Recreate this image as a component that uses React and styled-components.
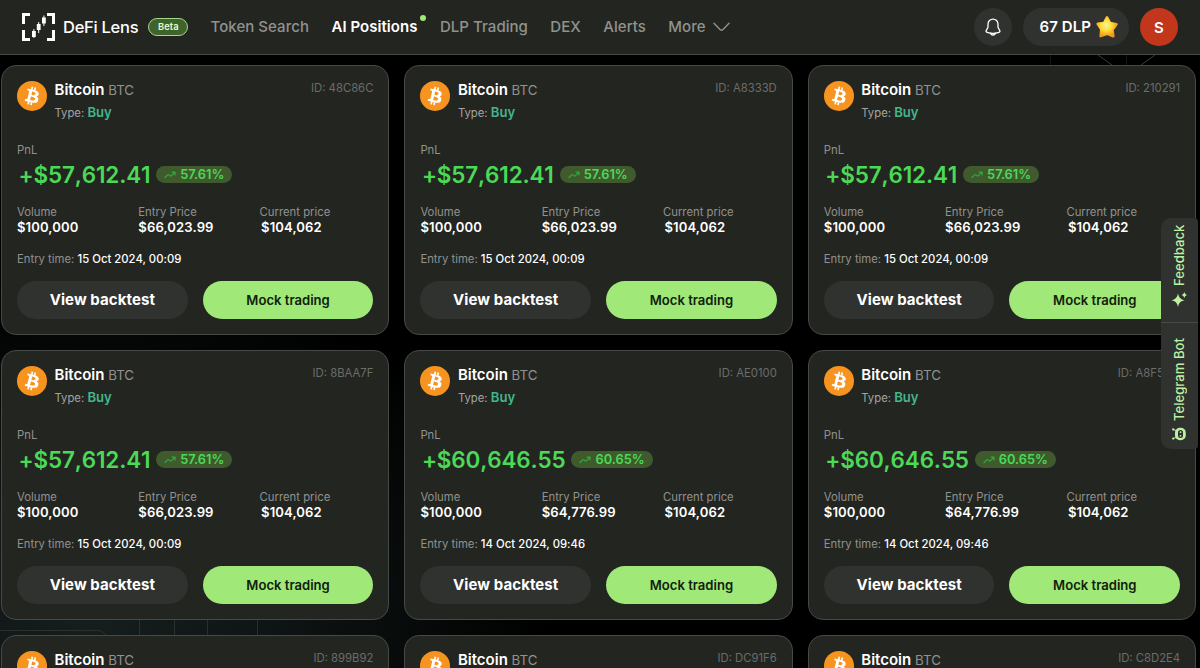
import React from "react";
import styled, { createGlobalStyle } from "styled-components";

const GlobalStyle = createGlobalStyle`
  * { box-sizing: border-box; }
  html, body { margin: 0; height: 668px; overflow: hidden; background: #000; }
  body { font-family: Inter, "Liberation Sans", sans-serif; color: #fff; }
`;

const Page = styled.div`
  position: relative;
  width: 1200px;
  height: 668px;
  overflow: hidden;
  background:
    radial-gradient(ellipse 460px 330px at 90px 610px, #161f1e 0%, #0d1312 45%, rgba(0, 0, 0, 0) 100%),
    #000;
`;

const Backdrop = styled.svg`
  position: absolute;
  inset: 0;
`;

const Header = styled.header`
  position: relative;
  display: flex;
  align-items: center;
  height: 55px;
  padding: 0 22px;
  background: #232521;
  border-bottom: 1px solid #474946;
`;

const Brand = styled.div`
  display: flex;
  align-items: center;
  width: 188.5px;
`;

const BrandName = styled.span`
  margin-left: 8px;
  font-size: 16.5px;
  font-weight: 500;
  letter-spacing: -0.27px;
  white-space: nowrap;
`;

const BetaTag = styled.span`
  margin-left: 10px;
  width: 40px;
  height: 18px;
  border: 1px solid #a5d78a;
  border-radius: 9px;
  background: #3f632c;
  color: #e2fbd3;
  font-size: 9.4px;
  font-weight: 600;
  line-height: 16px;
  text-align: center;
`;

const Nav = styled.nav`
  display: flex;
  align-items: center;
  gap: 22.4px;
  flex: 1;
  padding-bottom: 1px;
`;

const NavItem = styled.a`
  position: relative;
  display: flex;
  align-items: center;
  gap: 7px;
  font-size: 15px;
  font-weight: ${(p) => (p.$active ? 600 : 500)};
  letter-spacing: 0.05px;
  color: ${(p) => (p.$active ? "#fff" : "#91928f")};
  white-space: nowrap;
`;

const NavDot = styled.i`
  position: absolute;
  top: -2px;
  right: -8px;
  width: 6px;
  height: 6px;
  border-radius: 50%;
  background: #a0e878;
`;

const Actions = styled.div`
  display: flex;
  align-items: center;
  gap: 11px;
`;

const RoundButton = styled.button`
  display: flex;
  align-items: center;
  justify-content: center;
  width: 38px;
  height: 38px;
  padding: 0;
  border: 0;
  border-radius: 50%;
  background: ${(p) => p.$color || "#30322f"};
  color: #fff;
  font: 600 15px Inter, sans-serif;
`;

const Balance = styled.div`
  display: flex;
  align-items: center;
  gap: 5px;
  width: 106px;
  height: 38px;
  padding: 0 0 1px 16.5px;
  border-radius: 19px;
  background: #30322f;
  font-size: 15px;
  font-weight: 600;
  letter-spacing: 0.08px;
  white-space: nowrap;
`;

const Grid = styled.main`
  position: relative;
  display: grid;
  grid-template-columns: repeat(3, 388.4px);
  grid-auto-rows: 269.5px;
  gap: 15.5px 15px;
  padding: 10px 0 0 1px;
`;

const Card = styled.article`
  display: flex;
  flex-direction: column;
  padding: 14px 15px;
  border: 1px solid #474946;
  border-radius: 15px;
  background: #232521;
`;

const CardHead = styled.div`
  display: flex;
  height: 62px;
`;

const Identity = styled.div`
  flex: 1;
  padding-left: 7.5px;
`;

const AssetName = styled.div`
  height: 20px;
  line-height: 20px;
  font-size: 15px;
  font-weight: 600;
`;

const Ticker = styled.span`
  font-size: 13.3px;
  font-weight: 400;
  color: #91928f;
`;

const TradeType = styled.div`
  margin-top: 2px;
  line-height: 20px;
  font-size: 11.3px;
  color: #a3a4a2;
`;

const Side = styled.span`
  font-size: 13.1px;
  font-weight: 600;
  color: #43b58c;
`;

const PositionId = styled.div`
  padding-top: 1px;
  line-height: 15px;
  font-size: 11.3px;
  color: #6b6d6a;
`;

const Caption = styled.div`
  height: 16px;
  line-height: 16px;
  font-size: 11.3px;
  color: #91928f;
  white-space: nowrap;
`;

const Profit = styled.div`
  display: flex;
  align-items: center;
  gap: 6px;
  height: 29px;
  margin: 2px 0 15px;
  padding-left: 1.5px;
  font-size: 22.5px;
  font-weight: 600;
  font-kerning: none;
  letter-spacing: -0.17px;
  color: #4bd956;
`;

const GainTag = styled.span`
  display: flex;
  align-items: center;
  gap: 4px;
  height: 17px;
  padding: 0 8px;
  border-radius: 9px;
  background: #3f5b2e;
  font-size: 12.8px;
  font-weight: 600;
  font-kerning: normal;
  letter-spacing: 0;
`;

const Stats = styled.div`
  display: grid;
  grid-template-columns: repeat(3, 1fr);
  column-gap: 7.5px;
  height: 47px;
`;

const StatValue = styled.div`
  height: 16px;
  padding-left: ${(p) => (p.$inset ? "1.5px" : "0")};
  line-height: 15px;
  font-size: 13.1px;
  font-weight: 600;
  letter-spacing: 0.1px;
`;

const EntryTime = styled.span`
  font-weight: 500;
  letter-spacing: 0.02px;
  color: #fff;
`;

const Buttons = styled.div`
  display: flex;
  gap: 15px;
  margin-top: 14px;
`;

const Button = styled.button`
  flex: 1;
  height: 37.5px;
  padding: 0;
  border: 0;
  border-radius: 19px;
  background: ${(p) => (p.$primary ? "#a0e878" : "#30322f")};
  color: ${(p) => (p.$primary ? "#10200c" : "#fff")};
  font-family: Inter, sans-serif;
  font-size: ${(p) => (p.$primary ? "13.1px" : "15px")};
  font-weight: ${(p) => (p.$primary ? 600 : 700)};
  letter-spacing: ${(p) => (p.$primary ? "0" : "0.08px")};
`;

const SideTabs = styled.aside`
  position: absolute;
  top: 218px;
  left: 1161px;
  width: 37px;
  height: 231px;
  border-radius: 10px 4px 4px 10px;
  background: #30322f;
`;

const SideTab = styled.div`
  display: flex;
  align-items: center;
  gap: 6px;
  width: 37px;
  height: ${(p) => p.$height}px;
  padding-top: ${(p) => p.$pad}px;
  writing-mode: vertical-rl;
  transform: rotate(180deg);
  line-height: 37px;
  font-size: 13.1px;
  font-weight: 500;
  color: #bdf0a0;
  border-top: ${(p) => (p.$divided ? "1px solid #474946" : "0")};
  white-space: nowrap;
`;

const Logo = () => (
  <svg width="33" height="28" viewBox="0 0 33 28" fill="#fff">
    <path d="M0 0h8v3H3v8H0zM25 0h8v11h-3V3h-5zM0 17h3v8h5v3H0zM30 17h3v11h-8v-3h5z" />
    <path d="M10 18h3.8v6H10zM14.8 11h3.8v6h-3.8zM20 4.5h3.8v6H20z" />
    <path d="M11.4 16h1v9h-1zM16.2 9h1v11h-1zM21.4 2.5h1v10.5h-1z" />
  </svg>
);

const Chevron = () => (
  <svg width="17" height="10" viewBox="0 0 17 10" fill="none" stroke="#91928f" strokeWidth="1.4" strokeLinecap="round">
    <path d="M1 1.2 7 7.4Q8.5 8.8 10 7.4L16 1.2" />
  </svg>
);

const Bell = () => (
  <svg width="16" height="18" viewBox="0 0 16 18" fill="none" stroke="#fff" strokeWidth="1.3" strokeLinecap="round" strokeLinejoin="round">
    <path d="M8 1.1a5 5 0 0 0-5 5v2.6c0 .7-.3 1.4-.7 2l-1 1.6c-.6 1-.2 1.8.8 2.1 3.8 1.2 8 1.2 11.8 0 1-.3 1.4-1.2.8-2.1l-1-1.6c-.4-.6-.7-1.3-.7-2V6.1a5 5 0 0 0-5-5z" />
    <path d="M5.6 15.2a2.5 2.5 0 0 0 4.8 0" />
  </svg>
);

const Star = () => (
  <svg width="23" height="24" viewBox="0 0 23 24">
    <defs>
      <radialGradient id="star" cx="45%" cy="42%" r="58%">
        <stop offset="0" stopColor="#fff6a0" />
        <stop offset=".5" stopColor="#ffdc36" />
        <stop offset="1" stopColor="#f59a1c" />
      </radialGradient>
    </defs>
    <path
      d="M11 2.3 14.1 8 20.5 9.2 16.4 14.6 17.3 21.2 11.2 18.7 4.7 21 5.3 14.2 1.7 8.8 8 8z"
      fill="url(#star)"
      stroke="url(#star)"
      strokeWidth="2.6"
      strokeLinejoin="round"
    />
  </svg>
);

const BitcoinIcon = () => (
  <svg width="30" height="31" viewBox="0 -.5 32 32">
    <circle cx="16" cy="16" r="16" fill="#f7931f" />
    <path
      fill="#fff"
      fillRule="evenodd"
      d="M23.189 14.02c.314-2.096-1.283-3.223-3.465-3.975l.708-2.84-1.728-.43-.69 2.765c-.454-.114-.92-.22-1.385-.326l.695-2.783L15.596 6l-.708 2.839c-.376-.086-.746-.17-1.104-.26l.002-.009-2.384-.595-.46 1.846s1.283.294 1.256.312c.7.175.826.638.805 1.006l-.806 3.235c.048.012.11.03.18.057l-.183-.045-1.13 4.532c-.086.212-.303.531-.793.41.018.025-1.256-.313-1.256-.313l-.858 1.978 2.25.561c.418.105.828.215 1.231.318l-.715 2.872 1.727.43.708-2.84c.472.127.93.245 1.378.357l-.706 2.828 1.728.43.715-2.866c2.948.558 5.164.333 6.097-2.333.752-2.146-.037-3.385-1.588-4.192 1.13-.26 1.98-1.003 2.207-2.538zm-3.95 5.538c-.533 2.147-4.148.986-5.32.695l.95-3.805c1.172.293 4.929.872 4.37 3.11zm.535-5.569c-.487 1.953-3.495.96-4.47.717l.86-3.45c.975.243 4.118.696 3.61 2.733z"
    />
  </svg>
);

const TrendIcon = () => (
  <svg width="12" height="8" viewBox="0 0 12 8" fill="none" stroke="#35a83c" strokeWidth="1.2" strokeLinecap="round" strokeLinejoin="round">
    <path d="M1 6.5 3.6 3.9Q4.3 3.3 5 3.9L6.2 4.8Q6.9 5.3 7.5 4.7L10.8 1.4M8.2 1.2H11V3.9" />
  </svg>
);

const Sparkle = () => (
  <svg width="15" height="15" viewBox="0 0 15 15" fill="#bdf0a0" transform="rotate(180)" overflow="visible">
    <path d="M6 1.5Q7 7.500 12.500 8.300 7 9.100 6 15 5 9.100-.5 8.300 5 7.500 6 1.500z" />
    <path d="M12.300 0Q12.800 2.400 15 3 12.800 3.600 12.300 6 11.800 3.600 9.600 3 11.800 2.400 12.300 0z" />
  </svg>
);

const Robot = () => (
  <svg width="14" height="14" viewBox="0 0 14 14" transform="rotate(180)">
    <path d="M1 2.500l3 1M1 11.500l3-1" stroke="#bdf0a0" strokeWidth="1" strokeLinecap="round" />
    <circle cx="1.2" cy="2.4" r="1.1" fill="#bdf0a0" />
    <circle cx="1.2" cy="11.6" r="1.1" fill="#bdf0a0" />
    <rect x="3" y=".7" width="10.8" height="12.6" rx="5" fill="#bdf0a0" />
    <rect x="6" y="2.900" width="5" height="8.200" rx="2.500" fill="#30322f" />
    <circle cx="8.5" cy="5.2" r=".9" fill="#bdf0a0" />
    <circle cx="8.5" cy="8.8" r=".9" fill="#bdf0a0" />
  </svg>
);

const first = { pnl: "+$57,612.41", gain: "57.61%", entry: "$66,023.99", time: "15 Oct 2024, 00:09" };
const second = { pnl: "+$60,646.55", gain: "60.65%", entry: "$64,776.99", time: "14 Oct 2024, 09:46" };

const positions = [
  { id: "48C86C", ...first },
  { id: "A8333D", ...first },
  { id: "210291", ...first },
  { id: "8BAA7F", ...first },
  { id: "AE0100", ...second },
  { id: "A8F5DC", ...second },
  { id: "899B92", ...second },
  { id: "DC91F6", ...second },
  { id: "C8D2E4", ...second },
];

const PositionCard = ({ id, pnl, gain, entry, time }) => (
  <Card>
    <CardHead>
      <BitcoinIcon />
      <Identity>
        <AssetName>
          Bitcoin <Ticker>BTC</Ticker>
        </AssetName>
        <TradeType>
          Type: <Side>Buy</Side>
        </TradeType>
      </Identity>
      <PositionId>ID: {id}</PositionId>
    </CardHead>
    <Caption>PnL</Caption>
    <Profit>
      {pnl}
      <GainTag>
        <TrendIcon />
        {gain}
      </GainTag>
    </Profit>
    <Stats>
      <div>
        <Caption>Volume</Caption>
        <StatValue>$100,000</StatValue>
      </div>
      <div>
        <Caption>Entry Price</Caption>
        <StatValue>{entry}</StatValue>
      </div>
      <div>
        <Caption>Current price</Caption>
        <StatValue $inset>$104,062</StatValue>
      </div>
    </Stats>
    <Caption>
      Entry time: <EntryTime>{time}</EntryTime>
    </Caption>
    <Buttons>
      <Button>View backtest</Button>
      <Button $primary>Mock trading</Button>
    </Buttons>
  </Card>
);

export default function App() {
  return (
    <>
      <GlobalStyle />
      <Page>
        <Backdrop width="1200" height="668" fill="none" stroke="#2a302e">
          <path d="M0 630.5H97Q103 630.5 106 635M139.5 619v16M174.5 619v16M207.5 619v16M257.5 619v16" />
          <path d="M1098 55l14 10M1155 55l-14 10" stroke="#3a3a3a" />
          <path d="M1050.5 55v10M1126.5 55v10" stroke="#161616" />
        </Backdrop>
        <Header>
          <Brand>
            <Logo />
            <BrandName>DeFi Lens</BrandName>
            <BetaTag>Beta</BetaTag>
          </Brand>
          <Nav>
            <NavItem>Token Search</NavItem>
            <NavItem $active>
              AI Positions
              <NavDot />
            </NavItem>
            <NavItem>DLP Trading</NavItem>
            <NavItem>DEX</NavItem>
            <NavItem>Alerts</NavItem>
            <NavItem>
              More
              <Chevron />
            </NavItem>
          </Nav>
          <Actions>
            <RoundButton>
              <Bell />
            </RoundButton>
            <Balance>
              67 DLP
              <Star />
            </Balance>
            <RoundButton $color="#c2361b">S</RoundButton>
          </Actions>
        </Header>
        <Grid>
          {positions.map((p) => (
            <PositionCard key={p.id} {...p} />
          ))}
        </Grid>
        <SideTabs>
          <SideTab $height={105} $pad={15} $divided>
            <Sparkle />
            Feedback
          </SideTab>
          <SideTab $height={126} $pad={8}>
            <Robot />
            Telegram Bot
          </SideTab>
        </SideTabs>
      </Page>
    </>
  );
}
